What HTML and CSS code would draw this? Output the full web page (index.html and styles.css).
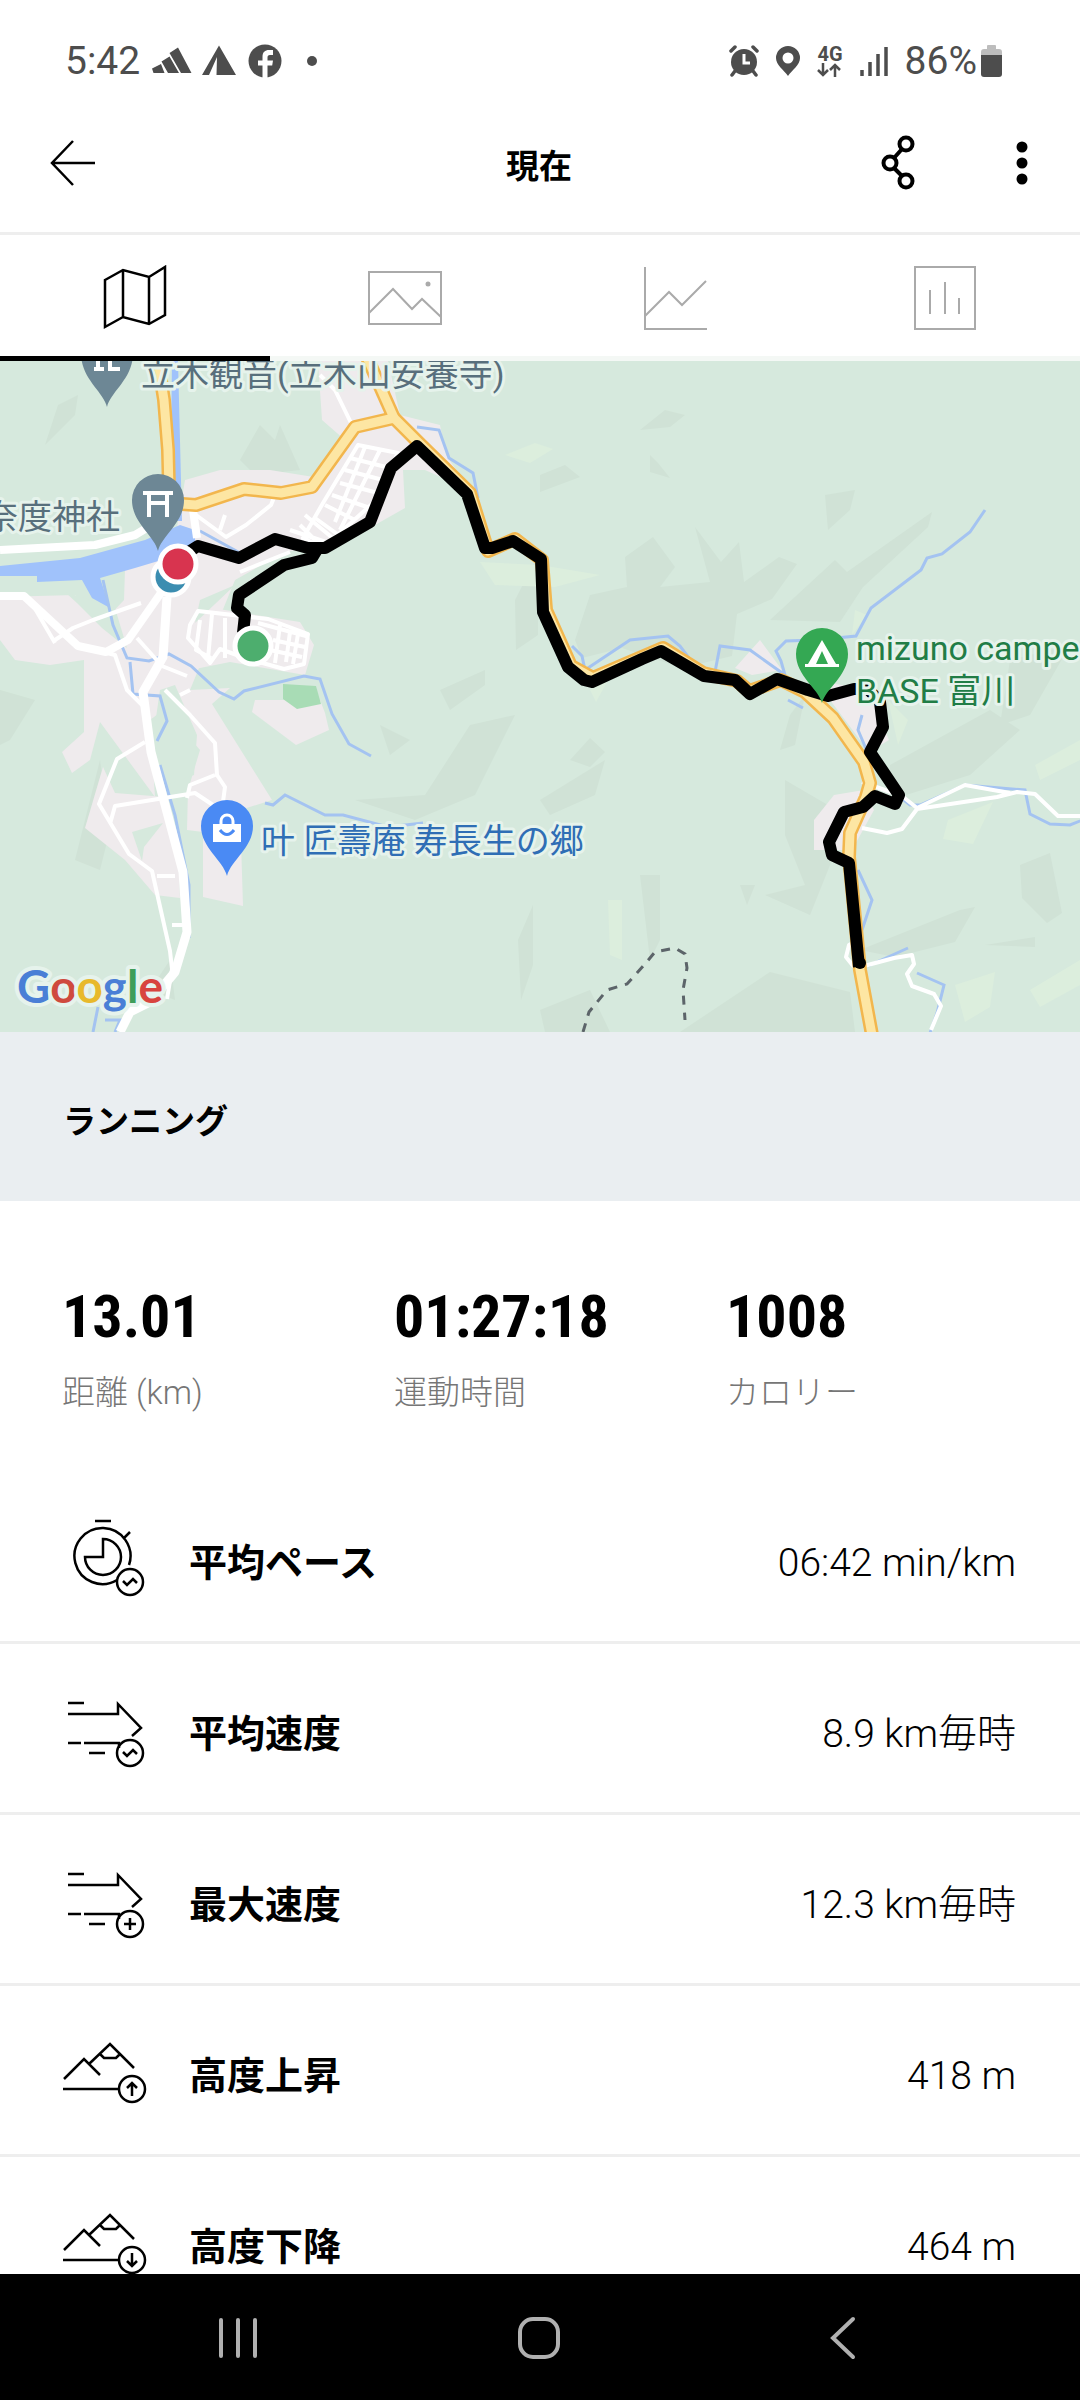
FILE: index.html
```html
<!DOCTYPE html>
<html lang="ja">
<head>
    <meta charset="UTF-8">
    <meta name="viewport" content="width=device-width, initial-scale=1.0">
    <title>現在</title>
    <link rel="stylesheet" href="styles.css">
</head>
<body>
    <div class="app">
        <div class="status-bar">
            <div class="status-left">
                <span class="clock">5:42</span>
                <svg class="status-icon" width="40" height="34" viewBox="0 0 40 34" fill="currentColor">
                    <path d="M0 24.500L9 20l3.500 9H1.500zM9.500 17.500l8-5L27 29H16zM17.500 9l8.500-5.500L39.500 29H29z"/>
                </svg>
                <svg class="status-icon gap-sm" width="34" height="34" viewBox="0 0 34 34" fill="currentColor">
                    <path d="M17 1.500L34 31H14.500l.5-18-8 18H0z"/>
                </svg>
                <svg class="status-icon gap-md" width="34" height="34" viewBox="0 0 34 34">
                    <circle cx="17" cy="17" r="16.500" fill="currentColor"/>
                    <path d="M14.500 34V21.500H10v-5h4.500V13c0-5 2.500-7 6.500-7h4v5h-3c-2 0-2.500 1-2.500 2.500v3H25l-.8 5h-4.700V34z" fill="#fff"/>
                </svg>
                <span class="dot"></span>
            </div>
            <div class="status-right">
                <svg width="30" height="32" viewBox="0 0 30 32">
                    <g stroke="currentColor" stroke-width="3.500" stroke-linecap="round">
                        <path d="M2 6l4-4M28 6l-4-4M6 26l-3 4M24 26l3 4"/>
                    </g>
                    <circle cx="15" cy="17" r="13" fill="currentColor"/>
                    <path d="M15 9v9h6" fill="none" stroke="#fff" stroke-width="3"/>
                </svg>
                <svg width="26" height="32" viewBox="0 0 26 32">
                    <path d="M13 31C9 25 1 20 1 13a12 12 0 0 1 24 0c0 7-8 12-12 18z" fill="currentColor"/>
                    <circle cx="13" cy="13" r="5.500" fill="#fff"/>
                </svg>
                <div class="network">
                    <span>4G</span>
                    <svg width="24" height="14" viewBox="0 0 24 14" fill="none" stroke="currentColor" stroke-width="2.500">
                        <path d="M6 0v12M1 7l5 5 5-5M18 14V2M13 7l5-5 5 5"/>
                    </svg>
                </div>
                <svg width="30" height="32" viewBox="0 0 30 32" stroke="currentColor" stroke-width="3.500">
                    <path d="M3 31v-6M11 31V17M19 31V9M27 31V2"/>
                </svg>
                <div class="battery">
                    <span>86%</span>
                    <svg width="21" height="34" viewBox="0 0 21 34">
                        <path d="M6 2q0-1 1-1h7q1 0 1 1v3h3q3 0 3 3v4H0V8q0-3 3-3h3z" fill="#bdbdbd"/>
                        <path d="M0 11h21v19q0 3-3 3H3q-3 0-3-3z" fill="currentColor"/>
                    </svg>
                </div>
            </div>
        </div>

        <header class="header">
            <button class="icon-btn" aria-label="戻る">
                <svg width="46" height="48" viewBox="0 0 46 48" fill="none" stroke="#000" stroke-width="2.500">
                    <path d="M45 24H2M23 2L2 24l21 22"/>
                </svg>
            </button>
            <h1 class="title">現在</h1>
            <div class="header-actions">
                <button class="icon-btn" aria-label="共有">
                    <svg width="36" height="56" viewBox="0 0 36 56" fill="none" stroke="#000" stroke-width="4">
                        <circle cx="26" cy="9" r="6.500"/>
                        <circle cx="10" cy="28" r="6.500"/>
                        <circle cx="26" cy="46" r="6.500"/>
                        <path d="M22 14l-8 9M14 33l8 8"/>
                    </svg>
                </button>
                <button class="icon-btn" aria-label="メニュー">
                    <svg width="12" height="44" viewBox="0 0 12 44">
                        <circle cx="6" cy="6" r="5.500"/>
                        <circle cx="6" cy="22" r="5.500"/>
                        <circle cx="6" cy="38" r="5.500"/>
                    </svg>
                </button>
            </div>
        </header>

        <nav class="tabs">
            <button class="tab active" aria-label="地図">
                <svg width="64" height="66" viewBox="0 0 64 66" fill="none" stroke="currentColor" stroke-width="2.500">
                    <path d="M2 15l18-10 26 7L62 2v48L46 59l-26-7L2 62zM20 5v47M46 12v47"/>
                </svg>
            </button>
            <button class="tab" aria-label="写真">
                <svg width="74" height="54" viewBox="0 0 74 54" fill="none" stroke="currentColor" stroke-width="2">
                    <path d="M1 1h72v52H1zM1 42l24-24 19 20 10-10 19 18"/>
                    <circle cx="60" cy="13" r="2.500" fill="currentColor" stroke="none"/>
                </svg>
            </button>
            <button class="tab" aria-label="グラフ">
                <svg width="64" height="64" viewBox="0 0 64 64" fill="none" stroke="currentColor" stroke-width="2">
                    <path d="M2 1v62h62M2 50l24-24 13 13 24-24"/>
                </svg>
            </button>
            <button class="tab" aria-label="統計">
                <svg width="64" height="64" viewBox="0 0 64 64" fill="none" stroke="currentColor" stroke-width="2">
                    <path d="M2 1h60v62H2zM17 24v24M32 16v32M46 32v16"/>
                </svg>
            </button>
        </nav>

        <main class="content">
            <svg class="map" viewBox="0 361 1080 671">
                <rect y="361" width="1080" height="671" fill="#d6e9dd"/>

                <!-- hills -->
                <g fill="#d0e2d6">
                    <path d="M45 445l30-30 3-20-20 10zM0 690l35 10-25 40-10 5zM240 460l20-35 15 15 5-15 20 45-45 5z"/>
                    <path d="M640 430l25-20 20 5-15 12zM540 475l25-10 15 12-40 15zM825 495l30-5-5 20-22 20zM650 455l8 8 12 15-20-6z"/>
                    <path d="M575 640l15-45 37-8-2-30 28-20 22 30-15 20 50-5-15-55 26 35 18-20 5 40 35-25 18 7-25 35-35 15-5 42-50 12-60-20-40 10z"/>
                    <path d="M770 620l65-60 12 12 85-60-4 15-65 60-23 35z"/>
                    <path d="M440 690l45-20v15l-35 25zM515 600l23-45v80l-22 15zM540 800l65-40-10 35-45 20zM570 760l20-22 15 14-15 15z"/>
                    <path d="M355 800l70-5 45-70 45-10-40 80-60 25zM380 725l30 15-20 15z"/>
                    <path d="M785 780l60 35-15 50-20 50-45-20 40-10-20-50zM890 765l100-55 30 20-50 45-80 25zM1010 660l60-15-40 70-30 10z"/>
                    <path d="M860 950l100-40 15-3-20 35-60 15zM1020 865l30-12 12 60-15 10-25-25zM985 945l50 -8v10z"/>
                    <path d="M640 875l20 0v65l-10 20zM740 885h15l-8 20zM780 750l10-35 15-20-10 50zM680 1032l90-60 80 20 5 40zM540 1010l50-20 20 42h-65z"/>
                    <path d="M75 860l25-100 10 70-10 40zM150 990l20-30 5 40zM518 940l15-35v60l-12 35z"/>
                </g>
                <g fill="#dceedd">
                    <path d="M505 455l30-12 18 6-23 14zM480 562l60 3 60 10-45 12-60-2zM590 690l18-10-12 22zM608 900h14v60l-12-5zM948 820l45-18-20 42-30-5z"/>
                    <path d="M1035 765l45-25v20l-40 20zM955 985l40-13-5 35-25 15zM1030 990l50-30v25l-40 22zM888 700l20 20-10 25zM855 610l12 5-15 20z"/>
                </g>

                <!-- towns -->
                <g fill="#efebed">
                    <path d="M318 361H388L400 415 440 425 446 455 470 490 425 470 403 470 405 508 345 542 285 552 235 580 200 606 300 622 314 645 305 675 230 662 180 672 190 690 230 688 212 704 272 800 240 810 243 906 203 897 203 832 187 830 188 790 200 750 170 715 150 690 185 480 220 470 270 470 320 478 345 440 322 420z"/>
                    <path d="M0 597L75 595 105 620 124 600 125 570 150 550 190 555 235 580 190 690 150 720 155 797 100 722 90 760 72 773 62 752 84 732V660L50 665 15 660 0 640z"/>
                    <path d="M103 767L85 828 125 860 155 895 180 898 178 850 165 797 115 793z"/>
                    <path d="M320 700l-65 0-3 12 44 33 33-15-4-17z"/>
                    <path d="M735 668l25-28 22 30-30 5zM815 680l52 10 22 50-20 12-30-40z"/>
                    <path d="M814 850v-30l20-25 30-5 10 20-22 40z"/>
                </g>
                <g fill="#d6e9dd">
                    <path d="M65 592l50 16 12 40-25-20-25-25zM200 600l35-15-40 38z"/>
                    <path d="M132 832l31-9-19 24-2 14zM160 690l15-5 22 50-3 40-28 10-14-40z"/>
                </g>
                <path d="M283 684l33 2 5 18-24 5-14-10z" fill="#a8dcb5"/>

                <!-- water -->
                <path d="M0 566l80-8 65-18 35-15 15 5v20l-60 18-35 10 10 30-18-10-10-18-45 2v-6H0z" fill="#a0c2fb"/>
                <path d="M172 361h6l4 160h-12z" fill="#a0c2fb"/>
                <g fill="none" stroke="#a4c3f1" stroke-width="3">
                    <path d="M103 580l10 45 14 33 22 3 20-7 22 12 28 26 15 7 10-8 60-15 16 3 12 35 17 30 22 12"/>
                    <path d="M130 662l3 32 27 2 7 25-10 20M160 765l15 50 14 70v53M200 531l40 22M417 427l22 3 10 28 24 15 5 25"/>
                    <path d="M265 803l8 2 12-10 40 20h18l45 12 35-4"/>
                    <path d="M572 646l10 10 3 14 45-30 38-4 12 10 15 20 20 6 5-26 30 4 35 25-4-14-5-10 10-10 30-1 40-4 15-28 50-38 6-12 15-4 28-22 15-22"/>
                    <path d="M788 700l15 8M862 715l-4 15 12 28 25 35 15 12 10 0 45-20 60 5 5 24 20 10 20 1 25-10M858 870l14 30-10 30M868 966l40-18M917 973l27 12-7 28-7 20M93 1032l5-25M105 1020l15 0-5 12"/>
                </g>

                <!-- small roads -->
                <g fill="none" stroke="#fff" stroke-width="4" stroke-linejoin="round">
                    <path d="M55 640l18-12 20-8 48-17M30 600l25 43M95 650l20 5 12 35 15 15"/>
                    <path d="M137 638l25 28 25 10M165 690l25 25 25 28 2 32 8 12-3 22M190 690l-10 5M215 775l-25 10-3 13M145 742l-28 17-18 45 30 50 23 17 18 80 2 18-5 30M110 824l5-18 80-13 18 12M157 876h18M172 925h12"/>
                    <path d="M320 375l15 15 18 37M196 515l30 22 20-12 25-20 4-10M225 515l-5 15"/>
                    <path d="M358 445l40 8-25 50-50 45-20-10 20-35zM345 470l38 10M340 483l38 10M332 495l35 12M325 505l30 15M315 518l25 18M365 447l-30 75M380 450l-40 80M305 515l30 25M300 525l20 20M335 545l-45-15M240 572l50-20M250 582l48-24M350 458l40 10"/>
                    <path d="M190 625l8-14 70 8 40 15-4 30-20 5-36-10-28-10-10 14-22-25zM200 620l-4 30 15 8M212 614l-4 45M225 618v40M280 625l-5 38M290 632l-4 30M298 634l-5 30M258 623l48 13M273 640l32 7M270 650l32 7"/>
                    <path d="M862 828l25 5 15-4 15-20 80-12 20-5 18 2 23 22h30M862 782l40 14 15 12 48-23 45 8M864 966l30-8 18-3 2 9-7 10 5 12 22 8 7 12-10 24"/>
                    <path d="M858 940l-9 5-3 12 8 10"/>
                </g>
                <g fill="none" stroke="#fff" stroke-linejoin="round">
                    <path d="M0 550l95-5 40-10 20-12" stroke-width="8"/>
                    <path d="M0 596h24l54 50 28 6 22-12 35-50" stroke-width="8"/>
                    <path d="M167 597l-4 60-20 35 8 60 32 120 4 60-12 40-25 30-20 10-10 20" stroke-width="9"/>
                    <path d="M193 510l4 28" stroke-width="8"/>
                </g>

                <!-- highways -->
                <defs>
                    <g id="highways">
                        <path d="M157 355l7 45 4 50 1 40"/>
                        <path d="M182 504l14 1 48-16 37 4 31-6 43-60 39-9 26 26 50 49 18 58 27-12 27 21 4 50 25 56 22 12 70-30 40 25 34 8 12 10 32-11 24 12 28 26 31 44 6 21-4 14-16 36-1 24 11 113 12 65"/>
                        <path d="M366 355l28 63"/>
                    </g>
                </defs>
                <g fill="none" stroke-linejoin="round">
                    <use href="#highways" stroke="#f2b64d" stroke-width="14"/>
                    <use href="#highways" stroke="#fde6a3" stroke-width="9"/>
                </g>

                <path d="M583 1032l6-20 18-22 20-6 18-20 10-12 20-4 10 6 2 14-4 22 2 30" fill="none" stroke="#5c6469" stroke-width="3" stroke-dasharray="9 8"/>

                <!-- recorded track -->
                <g fill="none" stroke="#000" stroke-width="12" stroke-linejoin="round">
                    <path d="M190 551l8-5 41 12 36-19 33 9h17l45-26 21-54 26-22 50 48 18 54h7l21-7 28 18 2 53 25 55 16 13 8 2 50-23 19-8 43 25 31 4 15 14 27-15 31 11 20 6 26-7 14 0 12 13 3 25-13 25 29 43-4 9-20-8-12 11-19 5-15 30 3 13 17 8 10 104"/>
                    <path d="M318 548l-6 10-28 7-45 30-2 13 8 7-2 18"/>
                </g>
                <circle cx="860" cy="963" r="6"/>

                <g stroke="#fff" stroke-width="5">
                    <circle cx="171" cy="577" r="18" fill="#3b8db0"/>
                    <circle cx="178" cy="564" r="18" fill="#d8344f"/>
                    <circle cx="253" cy="646" r="18" fill="#4dae6e"/>
                </g>

                <!-- places -->
                <g fill="#6d8795">
                    <path d="M107 407c-4-16-26-28-26-54a26 26 0 0 1 52 0c0 26-22 38-26 54z"/>
                    <path d="M158 551c-4-16-26-28-26-51a26 26 0 0 1 52 0c0 23-22 35-26 51z"/>
                </g>
                <path d="M98 361v8M94 369h10M110 361v8h10" fill="none" stroke="#fff" stroke-width="4"/>
                <path d="M143 493h30M149 493v24M167 493v24M147 503h22" fill="none" stroke="#fff" stroke-width="4"/>
                <path d="M822 703c-4-15-26-27-26-49a26 26 0 0 1 52 0c0 22-22 34-26 49z" fill="#34a853"/>
                <path d="M822 640l14 24h3v3h-34v-3h3zM822 651l-6 13h12z" fill="#fff" fill-rule="evenodd"/>
                <path d="M227 876c-4-16-26-28-26-50a26 26 0 0 1 52 0c0 22-22 34-26 50z" fill="#4a8af4"/>
                <path d="M213 824h28v18h-28z" fill="#fff"/>
                <path d="M221 825v-4a6 6 0 0 1 12 0v4" fill="none" stroke="#fff" stroke-width="3"/>
                <path d="M220 830q7 9 14 0" fill="none" stroke="#4a8af4" stroke-width="3"/>

                <text class="place" x="141" y="386">立木観音(立木山安養寺)</text>
                <text class="place" x="120" y="529" text-anchor="end">奈度神社</text>
                <text class="place shop" x="261" y="853">叶 匠壽庵 寿長生の郷</text>
                <text class="place camp" x="856" y="660">mizuno campe</text>
                <text class="place camp" x="856" y="703">BASE 富川</text>
                <text class="google" x="17" y="1003"><tspan fill="#4a7fd6">G</tspan><tspan fill="#cf4a3e">o</tspan><tspan fill="#e8b92c">o</tspan><tspan fill="#4a7fd6">g</tspan><tspan fill="#3f9e5a">l</tspan><tspan fill="#d8443e">e</tspan></text>
            </svg>

            <h2 class="activity">ランニング</h2>

            <section class="summary">
                <div>
                    <p class="number">13.01</p>
                    <p class="caption">距離 (km)</p>
                </div>
                <div>
                    <p class="number">01:27:18</p>
                    <p class="caption">運動時間</p>
                </div>
                <div>
                    <p class="number">1008</p>
                    <p class="caption">カロリー</p>
                </div>
            </section>

            <ul class="details">
                <li class="row">
                    <svg class="row-icon" viewBox="0 0 90 84">
                        <path d="M32 4h16M67 15l-7 7M66 48a28 28 0 1 0-12 15M40 22v18H22a18 18 0 1 0 18-18z"/>
                        <circle cx="67" cy="65" r="13"/>
                        <path d="M60 64l4 4 6-6 4 4"/>
                    </svg>
                    <span class="label">平均ペース</span>
                    <span class="value">06:42 min/km</span>
                </li>
                <li class="row">
                    <svg class="row-icon" viewBox="0 0 90 84">
                        <path d="M5 15h16M5 26h50V16l23 24-9 8M5 55h13M21 55h35v5M26 65h16"/>
                        <circle cx="67" cy="65" r="13"/>
                        <path d="M60 64l4 4 6-6 4 4"/>
                    </svg>
                    <span class="label">平均速度</span>
                    <span class="value">8.9 km毎時</span>
                </li>
                <li class="row">
                    <svg class="row-icon" viewBox="0 0 90 84">
                        <path d="M5 15h16M5 26h50V16l23 24-9 8M5 55h13M21 55h35v5M26 65h16"/>
                        <circle cx="67" cy="65" r="13"/>
                        <path d="M61 65h12M67 59v12"/>
                    </svg>
                    <span class="label">最大速度</span>
                    <span class="value">12.3 km毎時</span>
                </li>
                <li class="row">
                    <svg class="row-icon" viewBox="0 0 90 84">
                        <path d="M1 49l20-20 16 16M26 34l21-20 24 24M37 24l4 4h12l4-4M0 59h56"/>
                        <circle cx="69" cy="59" r="13"/>
                        <path d="M69 66V53M64 58l5-5 5 5"/>
                    </svg>
                    <span class="label">高度上昇</span>
                    <span class="value">418 m</span>
                </li>
                <li class="row">
                    <svg class="row-icon" viewBox="0 0 90 84">
                        <path d="M1 49l20-20 16 16M26 34l21-20 24 24M37 24l4 4h12l4-4M0 59h56"/>
                        <circle cx="69" cy="59" r="13"/>
                        <path d="M69 52v13M64 60l5 5 5-5"/>
                    </svg>
                    <span class="label">高度下降</span>
                    <span class="value">464 m</span>
                </li>
            </ul>
        </main>

        <nav class="system-nav">
            <button class="nav-btn" aria-label="履歴">
                <svg width="42" height="44" viewBox="0 0 42 44"><path d="M4 4v36M21 4v36M38 4v36"/></svg>
            </button>
            <button class="nav-btn" aria-label="ホーム">
                <svg width="44" height="44" viewBox="0 0 44 44"><rect x="3" y="3" width="38" height="38" rx="13"/></svg>
            </button>
            <button class="nav-btn" aria-label="戻る">
                <svg width="44" height="44" viewBox="0 0 44 44"><path d="M34 3L14 22l20 19"/></svg>
            </button>
        </nav>
    </div>
</body>
</html>
```

FILE: styles.css
```css
*{
    margin: 0;
    padding: 0;
    box-sizing: border-box;
}
body{
    font-family: Roboto, "Noto Sans CJK JP", sans-serif;
    background-color: #fff;
    color: #000;
}
button{
    border: none;
    background: none;
}
svg{
    display: block;
    flex: none;
}
.app{
    height: 100vh;
    display: flex;
    flex-direction: column;
}

/* status bar */
.status-bar{
    display: flex;
    justify-content: space-between;
    align-items: center;
    padding: 36px 78px 0 65px;
    height: 86px;
    color: #4d4d4d;
    font-size: 39px;
    line-height: 48px;
}
.status-left,
.status-right,
.battery{
    display: flex;
    align-items: center;
}
.clock{
    margin-right: 12px;
}
.gap-sm{
    margin-left: 10px;
}
.gap-md{
    margin-left: 12px;
}
.dot{
    width: 10px;
    height: 10px;
    border-radius: 50%;
    background-color: #4d4d4d;
    margin-left: 25px;
}
.status-right{
    gap: 16px;
}
.battery{
    gap: 4px;
}
.network{
    font-size: 20px;
    font-weight: 700;
    line-height: 18px;
}

/* header */
.header{
    display: grid;
    grid-template-columns: 1fr auto 1fr;
    align-items: center;
    height: 149px;
    padding: 8px 52px 0 50px;
    border-bottom: 3px solid #eee;
}
.title{
    font-size: 33px;
    line-height: 48px;
    font-weight: 700;
    padding-top: 8px;
}
.header-actions{
    display: flex;
    justify-content: flex-end;
    align-items: center;
    gap: 100px;
}
.icon-btn{
    justify-self: start;
}

/* tabs */
.tabs{
    display: grid;
    grid-template-columns: repeat(4, 1fr);
}
.tab{
    display: flex;
    justify-content: center;
    align-items: center;
    height: 126px;
    padding-top: 4px;
    color: #aaa;
    border-bottom: 5px solid #f4f8f5;
}
.tab.active{
    color: #000;
    border-bottom-color: #000;
}

.content{
    flex: 1;
    min-height: 0;
    overflow: hidden;
}

/* map */
.map{
    width: 100%;
}
.place{
    font-size: 34px;
    fill: #586f7c;
    stroke: #e6f3ec;
    stroke-width: 6px;
    stroke-linejoin: round;
    paint-order: stroke;
}
.shop{
    fill: #2f6eb5;
}
.camp{
    fill: #217d46;
}
.google{
    font-family: Lato, sans-serif;
    font-size: 46px;
    font-weight: 700;
    stroke: #e6f3ec;
    stroke-width: 8px;
    stroke-linejoin: round;
    paint-order: stroke;
}

.activity{
    padding: 66px 63px 55px;
    background-color: #eaeef1;
    font-size: 33px;
    line-height: 48px;
    font-weight: 700;
}

/* summary */
.summary{
    display: grid;
    grid-template-columns: repeat(3, 1fr);
    padding: 80px 22px 56px 62px;
}
.number{
    font-family: "Roboto Condensed", "Liberation Sans Narrow", Roboto, sans-serif;
    font-size: 60px;
    line-height: 72px;
    font-weight: 700;
}
.caption{
    margin-top: 16px;
    color: #767676;
    font-size: 33px;
    line-height: 48px;
    font-weight: 300;
}

/* details */
.details{
    list-style: none;
}
.row{
    display: flex;
    align-items: center;
    height: 171px;
    padding: 12px 64px 0 63px;
    border-bottom: 3px solid #eee;
    font-size: 38px;
    line-height: 48px;
}
.row-icon{
    width: 90px;
    height: 84px;
    margin-right: 36px;
    fill: none;
    stroke: #000;
    stroke-width: 2.5;
}
/* the icons sit a little above the text line */
.details .row-icon{
    margin-bottom: 8px;
}
.label{
    font-weight: 700;
}
.value{
    margin-left: auto;
    font-size: 39px;
    font-weight: 300;
}

/* system navigation */
.system-nav{
    flex: none;
    display: flex;
    justify-content: center;
    align-items: center;
    gap: 258px;
    height: 126px;
    padding-top: 2px;
    background-color: #000;
}
.nav-btn svg{
    fill: none;
    stroke: #b0b0b0;
    stroke-width: 4;
    stroke-linecap: round;
}
```
